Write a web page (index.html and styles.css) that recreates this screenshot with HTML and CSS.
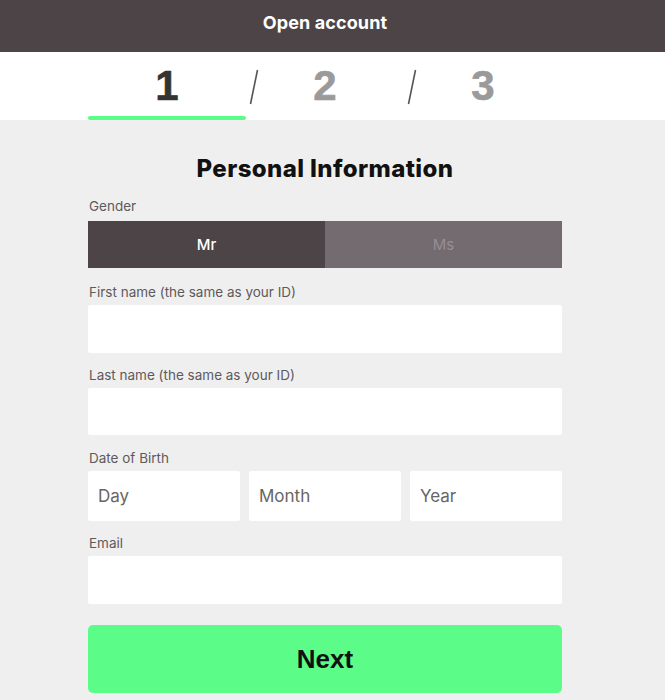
FILE: index.html
```html
<!DOCTYPE html>
<html>
<head>
<meta charset="utf-8">
<link rel="stylesheet" href="styles.css">
</head>
<body>
<header class="topbar"><span class="topbar-title">Open account</span></header>
<nav class="steps">
  <div class="steps-inner">
    <div class="step active"><span class="num">1</span></div>
    <div class="step"><svg class="slash" width="10" height="36" viewBox="0 0 10 36"><line x1="8.5" y1="1" x2="1.5" y2="35" stroke="#555" stroke-width="1.6"/></svg><span class="num">2</span></div>
    <div class="step"><svg class="slash" width="10" height="36" viewBox="0 0 10 36"><line x1="8.5" y1="1" x2="1.5" y2="35" stroke="#555" stroke-width="1.6"/></svg><span class="num">3</span></div>
  </div>
</nav>
<main class="content">
  <form class="form">
    <h1 class="title">Personal Information</h1>
    <div class="field first">
      <label class="label">Gender</label>
      <div class="toggle">
        <div class="opt on">Mr</div>
        <div class="opt off">Ms</div>
      </div>
    </div>
    <div class="field after-toggle">
      <label class="label">First name (the same as your ID)</label>
      <input class="input h48" type="text">
    </div>
    <div class="field">
      <label class="label">Last name (the same as your ID)</label>
      <input class="input" type="text">
    </div>
    <div class="field dob-field">
      <label class="label">Date of Birth</label>
      <div class="dob">
        <input class="input tall" type="text" placeholder="Day">
        <input class="input tall" type="text" placeholder="Month">
        <input class="input tall" type="text" placeholder="Year">
      </div>
    </div>
    <div class="field">
      <label class="label">Email</label>
      <input class="input h48" type="text">
    </div>
    <button class="next" type="button">Next</button>
  </form>
</main>
</body>
</html>
```
FILE: styles.css
```css
* { box-sizing: border-box; }
html, body { margin: 0; padding: 0; }
body {
  background: #efefef;
  font-family: Inter, "Liberation Sans", sans-serif;
  color: #222;
}
.topbar {
  height: 52px;
  background: #4d4448;
  color: #fff;
  display: flex;
  align-items: center;
  justify-content: center;
  padding: 0 15px 7px 0;
}
.topbar-title {
  font-weight: 700;
  font-size: 18px;
  letter-spacing: 0.1px;
}
.steps {
  background: #fff;
  height: 68px;
  padding-right: 15px;
}
.steps-inner {
  width: 474px;
  margin: 0 auto;
  display: grid;
  grid-template-columns: repeat(3, 1fr);
  height: 100%;
}
.step {
  position: relative;
  display: flex;
  justify-content: center;
  align-items: center;
  padding-bottom: 1px;
}
.step.active::after {
  content: "";
  position: absolute;
  left: 0;
  right: 0;
  bottom: 0;
  height: 4px;
  background: #5cfc88;
  border-radius: 2px;
}
.num {
  font-family: "Liberation Sans", Arial, sans-serif;
  font-weight: 700;
  font-size: 42px;
  color: #9a9a9a;
  line-height: 1;
  -webkit-text-stroke: 0.6px currentColor;
}
.step.active .num { color: #333; }
.slash {
  position: absolute;
  left: 3px;
  top: 17px;
}
.content {
  padding-top: 34px;
  padding-right: 15px;
}
.form {
  width: 474px;
  margin: 0 auto;
  display: flex;
  flex-direction: column;
}
.title {
  margin: 0;
  text-align: center;
  font-size: 24px;
  font-weight: 800;
  color: #111;
  line-height: 30px;
  letter-spacing: 0.4px;
}
.field {
  display: flex;
  flex-direction: column;
  margin-top: 14px;
}
.field.first { margin-top: 14px; }
.field.after-toggle { margin-top: 16px; }
.field.dob-field { margin-top: 15px; }
.label {
  font-size: 13.5px;
  line-height: 17px;
  color: #5e5a5c;
  margin-bottom: 4px;
  padding-left: 1px;
}
.field.first .label { margin-bottom: 6px; }
.toggle {
  display: grid;
  grid-template-columns: 1fr 1fr;
  height: 47px;
}
.opt {
  display: flex;
  align-items: center;
  justify-content: center;
  font-size: 15px;
}
.opt.on { background: #4d4448; color: #fff; font-weight: 500; }
.opt.off { background: #736b6f; color: #958f92; }
.input {
  display: block;
  width: 100%;
  height: 47px;
  border: 0;
  border-radius: 2px;
  background: #fff;
  font-family: inherit;
  font-size: 17px;
  padding: 0 10px;
  outline: none;
}
.input.h48 { height: 48px; }
.input.tall { height: 50px; }
.input::placeholder { color: #666; }
.dob {
  display: grid;
  grid-template-columns: repeat(3, 1fr);
  gap: 9px;
}
.next {
  margin-top: 21px;
  height: 68px;
  border: 0;
  border-radius: 5px;
  background: #5cfc88;
  color: #111;
  font-family: "Liberation Sans", Arial, sans-serif;
  font-weight: 700;
  font-size: 26px;
}
```
